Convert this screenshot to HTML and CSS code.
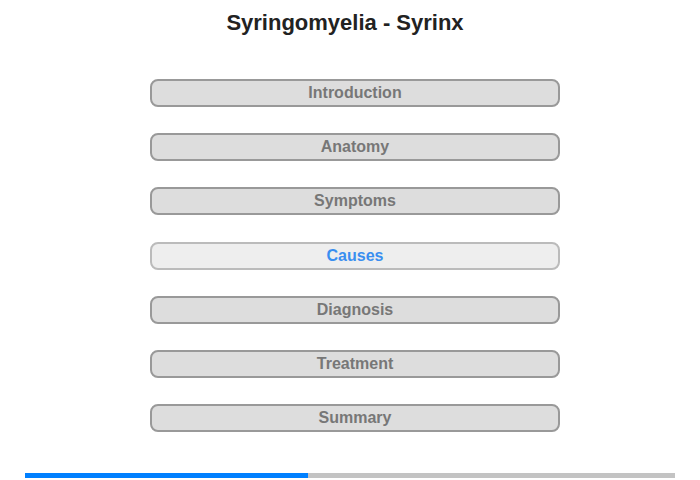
FILE: index.html
```html
<!DOCTYPE html>
<html>
<head>
<meta charset="utf-8">
<link rel="stylesheet" href="styles.css">
</head>
<body>
<div class="page">
  <h1 class="title">Syringomyelia - Syrinx</h1>
  <nav class="menu">
    <div class="btn">Introduction</div>
    <div class="btn">Anatomy</div>
    <div class="btn">Symptoms</div>
    <div class="btn active">Causes</div>
    <div class="btn">Diagnosis</div>
    <div class="btn">Treatment</div>
    <div class="btn">Summary</div>
  </nav>
  <div class="progress"><div class="progress-fill" style="width:43.6%"></div></div>
</div>
</body>
</html>
```
FILE: styles.css
```css
html, body {
  margin: 0;
  padding: 0;
  background: #fff;
}
.page {
  width: 700px;
  height: 480px;
  font-family: "Liberation Sans", Arial, sans-serif;
  display: flex;
  flex-direction: column;
  align-items: center;
}
.title {
  margin: 10px 10px 0 0;
  font-size: 22px;
  line-height: 26px;
  font-weight: bold;
  color: #222;
}
.menu {
  margin: 43px 0 0 10px;
  display: flex;
  flex-direction: column;
  gap: 26.2px;
}
.btn {
  box-sizing: border-box;
  width: 410px;
  height: 28px;
  border: 2px solid #999;
  border-radius: 8px;
  background: #ddd;
  color: #777;
  font-size: 16px;
  font-weight: bold;
  line-height: 24px;
  text-align: center;
}
.btn.active {
  background: #eee;
  border-color: #bbb;
  color: #3a8ef0;
}
.progress {
  margin-top: 41px;
  width: 650px;
  height: 5px;
  background: #c3c3c3;
  display: flex;
}
.progress-fill {
  height: 100%;
  background: #0080ff;
}
```
